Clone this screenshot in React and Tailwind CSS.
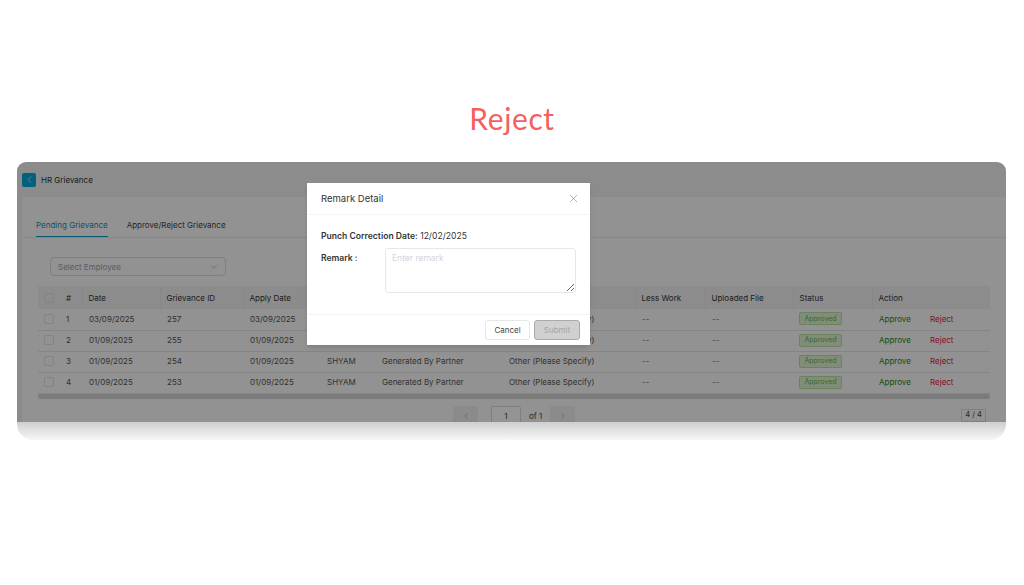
import React from "react";
import { ChevronLeft, ChevronRight, ChevronDown, X } from "lucide-react";

const rows = [
  ["1", "03/09/2025", "257", "03/09/2025"],
  ["2", "01/09/2025", "255", "01/09/2025"],
  ["3", "01/09/2025", "254", "01/09/2025"],
  ["4", "01/09/2025", "253", "01/09/2025"],
];
const heads = ["#", "Date", "Grievance ID", "Apply Date", "Employee", "Generated By", "Category", "Less Work", "Uploaded File", "Status", "Action"];
const cols = ["w-[22px]", "w-[22px]", "w-[78px]", "w-[83px]", "w-[77px]", "w-[55px]", "w-[127px]", "w-[133px]", "w-[70px]", "w-[88px]", "w-[79px]", "w-[118px]"];

function Box() {
  return <div className="ml-[6px] h-[10px] w-[10px] rounded-[2px] border border-[#e2e2e2]" />;
}

export default function App() {
  return (
    <div className="h-[585px] w-[1024px] overflow-hidden bg-white font-['Inter',sans-serif]">
      <div className="flex h-[162px] justify-center pt-[99px]">
        <h1 className="font-['Lato',sans-serif] text-[30px] leading-[38px] tracking-[0.6px] text-[#f65f5f]">Reject</h1>
      </div>
      <div className="relative ml-[17px] h-[278px] w-[989px] overflow-hidden rounded-t-[9px] rounded-b-[16px]">
        <div className="h-[260px] overflow-hidden bg-[#f1f1f1] text-[#444]">
          <div className="flex h-[35px] items-center gap-[5px] pl-[5px]">
            <div className="flex h-[14px] w-[14px] items-center justify-center rounded-[2px] bg-[#0aa5dd] text-white">
              <ChevronLeft size={11} strokeWidth={1.5} />
            </div>
            <span className="pt-[1px] text-[8px] text-[#333]">HR Grievance</span>
          </div>
          <div className="ml-[5px] h-[225px] rounded-tl-[4px] bg-[#fbfbfb]">
            <div className="flex h-[41px] items-end gap-[19px] border-b border-[#e8e8e8] pl-[14px]">
              <div className="flex h-[18px] items-start border-b border-[#1196c8] text-[8px] text-[#1b8db8]">Pending Grievance</div>
              <div className="flex h-[18px] items-start text-[8px] text-[#444]">Approve/Reject Grievance</div>
            </div>
            <div className="pl-[28px] pt-[19px]">
              <div className="flex h-[19px] w-[176px] items-center justify-between rounded-[4px] border border-[#dcdcdc] pl-[7px] pr-[6px] pt-[1px] text-[8px] text-gray-400">
                <span>Select Employee</span>
                <ChevronDown size={10} strokeWidth={1.5} />
              </div>
            </div>
            <div className="ml-[16px] mt-[10px] w-[952px]">
              <table className="w-[952px] table-fixed border-collapse text-left text-[8px] leading-[12px]">
                <colgroup>
                  {cols.map((c, i) => (
                    <col key={i} className={c} />
                  ))}
                </colgroup>
                <thead>
                  <tr className="h-[23px] bg-[#f1f1f1]">
                    <th className="p-0 font-normal"><Box /></th>
                    {heads.map((h) => (
                      <th key={h} className={`p-0 pt-px font-normal text-[#333] ${h === "#" ? "pl-[6px]" : "border-l border-[#e9e9e9] pl-[6px]"}`}>{h}</th>
                    ))}
                  </tr>
                </thead>
                <tbody>
                  {rows.map((r) => (
                    <tr key={r[0]} className="h-[21px] border-b border-[#e6e6e6] text-[#555] [&>td]:pb-px">
                      <td className="p-0"><Box /></td>
                      <td className="p-0 pl-[6px]">{r[0]}</td>
                      <td className="p-0 pl-[7px]">{r[1]}</td>
                      <td className="p-0 pl-[7px]">{r[2]}</td>
                      <td className="p-0 pl-[7px]">{r[3]}</td>
                      <td className="p-0 pl-[7px]">SHYAM</td>
                      <td className="p-0 pl-[7px]">Generated By Partner</td>
                      <td className="p-0 pl-[7px]">Other (Please Specify)</td>
                      <td className="p-0 pl-[7px] text-[#777]">--</td>
                      <td className="p-0 pl-[7px] text-[#777]">--</td>
                      <td className="p-0 pl-[6px]">
                        <span className="inline-flex h-[13px] w-[43px] items-center justify-center rounded-[2px] border border-[#b7e2a0] bg-[#dff3d2] align-middle text-[7px] text-[#62b84a]">Approved</span>
                      </td>
                      <td className="p-0 pl-[7px]">
                        <div className="flex">
                          <span className="w-[51px] text-[#1b8a1b]">Approve</span>
                          <span className="text-[#e5203d]">Reject</span>
                        </div>
                      </td>
                    </tr>
                  ))}
                </tbody>
              </table>
              <div className="h-[5px] rounded-[3px] bg-[#d4d4d4]" />
            </div>
            <div className="relative mt-[7px] flex h-[20px] items-start pl-[431px] text-[8px]">
              <div className="flex h-[20px] w-[25px] items-center justify-center rounded-[2px] bg-[#f0f0f0] text-gray-400"><ChevronLeft size={10} strokeWidth={1.5} /></div>
              <div className="ml-[13px] flex h-[20px] w-[30px] items-center justify-center rounded-[2px] border border-[#dcdcdc] bg-white text-[#444]">1</div>
              <span className="ml-[8px] mt-[4px] text-[#444]">of 1</span>
              <div className="ml-[8px] flex h-[20px] w-[25px] items-center justify-center rounded-[2px] bg-[#f0f0f0] text-gray-400"><ChevronRight size={10} strokeWidth={1.5} /></div>
              <div className="absolute right-[20px] top-[3px] flex h-[13px] w-[25px] items-center justify-center border border-[#dcdcdc] text-[7.5px] text-[#444]">4 / 4</div>
            </div>
          </div>
        </div>

        <div className="h-[18px] bg-gradient-to-b from-[#cfcfcf] to-[#f7f7f7]" />

        <div className="absolute inset-x-0 top-0 h-[260px] bg-black/[0.42]" />

        <div className="absolute left-[290px] top-[21px] flex h-[162px] w-[283px] flex-col bg-white shadow-md">
          <div className="flex h-[32px] items-center justify-between border-b border-gray-100 pl-[14px] pr-[10px]">
            <span className="pt-px text-[9.5px] text-[#333]">Remark Detail</span>
            <X size={13} strokeWidth={1} className="text-gray-500" />
          </div>
          <div className="h-[100px] border-b border-gray-100 pl-[14px] pr-[13px] pt-[15px] text-[8.6px] text-[#333]">
            <div className="leading-[12px]"><b className="font-semibold">Punch Correction Date:</b> 12/02/2025</div>
            <div className="mt-[6px] flex">
              <div className="w-[64px] pt-[4px] font-semibold leading-[12px]">Remark :</div>
              <textarea placeholder="Enter remark" className="h-[45px] w-[191px] rounded-[3px] border border-gray-200 px-[6px] py-[3px] text-[8.5px] leading-[12px] outline-none placeholder:text-gray-300" />
            </div>
          </div>
          <div className="flex flex-1 items-start justify-end gap-[4px] pr-[10px] pt-[5px] text-[8px]">
            <button className="h-[20px] w-[45px] rounded-[3px] border border-gray-200 bg-white text-[#444]">Cancel</button>
            <button className="h-[20px] w-[46px] rounded-[3px] border border-[#aaa] bg-[#d0d0d0] text-[#a5a5a5]">Submit</button>
          </div>
        </div>
      </div>
    </div>
  );
}
